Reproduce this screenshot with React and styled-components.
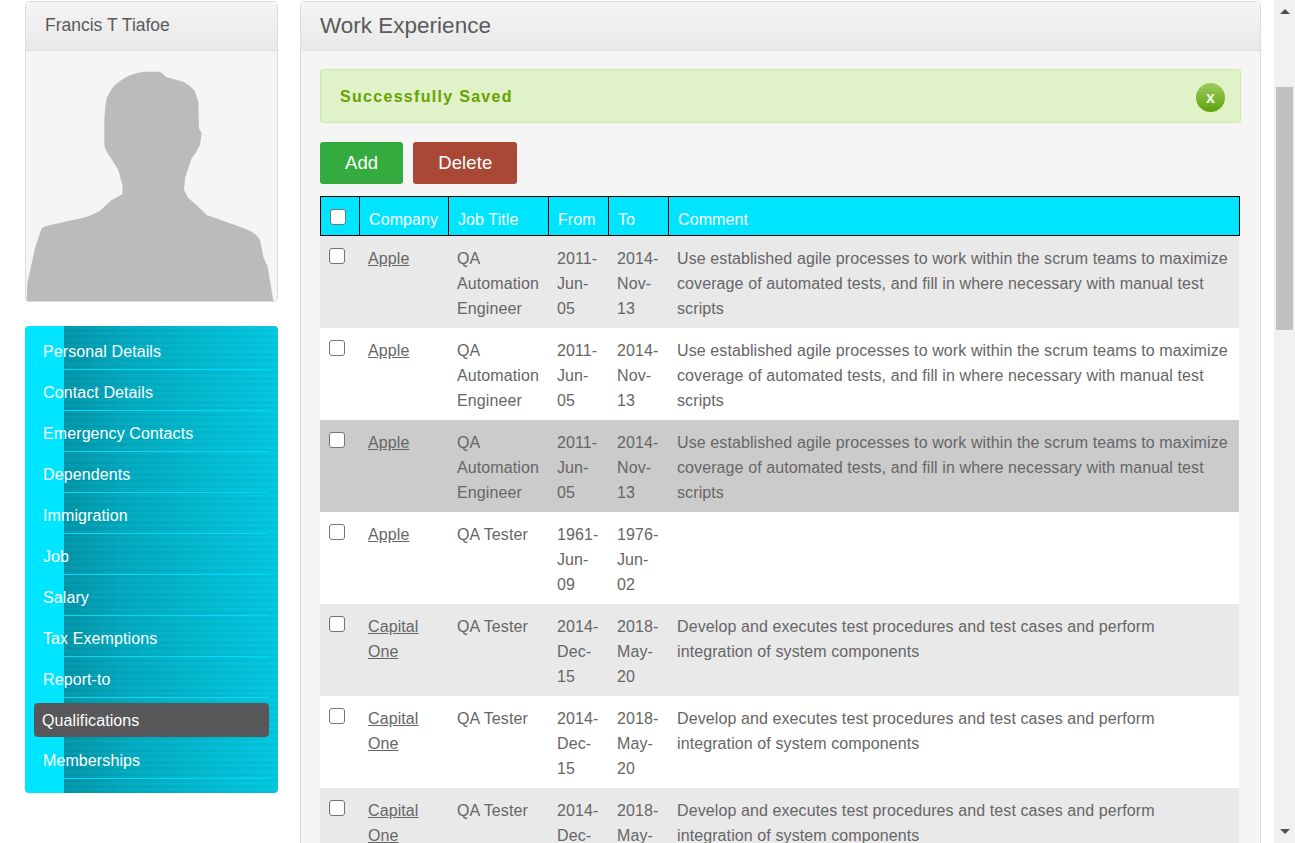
import React from 'react';
import styled, { createGlobalStyle } from 'styled-components';

const GlobalStyle = createGlobalStyle`
  html, body {
    margin: 0;
    height: 100%;
    overflow: hidden;
    background: #fff;
    font-family: 'Liberation Sans', Arial, sans-serif;
    color: #666;
  }
`;

const Page = styled.div`
  display: flex;
  height: 843px;
  overflow: hidden;
`;

const Content = styled.div`
  display: flex;
  align-items: flex-start;
  gap: 22px;
  width: 1274px;
  padding: 1px 13px 0 25px;
  box-sizing: border-box;
`;

const Sidebar = styled.aside`
  width: 253px;
  flex-shrink: 0;
`;

const Panel = styled.section`
  background: #f5f5f5;
  border: 1px solid #ddd;
  border-radius: 4px;
  box-sizing: border-box;
`;

const PanelHeader = styled.header`
  height: 49px;
  box-sizing: border-box;
  border-bottom: 1px solid #ddd;
  background: linear-gradient(to bottom, #f5f5f5, #e8e8e8);
  color: #5a5a5a;
  display: flex;
  align-items: center;
`;

const ProfileName = styled.h3`
  margin: 0 0 1px 19px;
  font-size: 17.5px;
  font-weight: normal;
`;

const PageTitle = styled.h1`
  margin: 0 0 1px 19px;
  font-size: 22.5px;
  font-weight: normal;
`;

const Photo = styled.svg`
  display: block;
  width: 251px;
  height: 250px;
`;

const Menu = styled.nav`
  margin-top: 24px;
  height: 467px;
  box-sizing: border-box;
  padding: 7px 9px 0;
  border-radius: 4px;
  background:
    linear-gradient(to right, #00e5ff 39px, transparent 39px),
    repeating-linear-gradient(to bottom, rgba(255, 255, 255, 0.025) 0 3px, rgba(0, 0, 0, 0.025) 3px 6px),
    linear-gradient(to right, #0095a8 39px, #00a9bf 100px, #00c8e0 100%);
`;

const MenuItem = styled.a`
  display: block;
  position: relative;
  height: ${p => (p.$active ? '34px' : '36px')};
  margin-top: ${p => (p.$active ? '6px' : '0')};
  margin-bottom: 5px;
  padding: ${p => (p.$active ? '1px 0 0 8px' : '2px 0 0 9px')};
  box-sizing: border-box;
  border-radius: 4px;
  font-size: 16px;
  letter-spacing: 0.1px;
  line-height: 34px;
  color: #fff;
  background: ${p => (p.$active ? '#58585a' : 'transparent')};

  &::after {
    content: '';
    display: ${p => (p.$active ? 'none' : 'block')};
    position: absolute;
    left: 30px;
    right: 0;
    bottom: -1px;
    height: 1px;
    background: #00dcf5;
  }
`;

const PanelBody = styled.div`
  padding: 18px 19px 0;
`;

const Main = styled(Panel)`
  width: 961px;
  height: 900px;
  flex-shrink: 0;
`;

const Alert = styled.div`
  display: flex;
  align-items: center;
  justify-content: space-between;
  height: 54px;
  box-sizing: border-box;
  padding: 2px 15px 0 19px;
  background: #dff2c8;
  border: 1px solid #cdeaa6;
  border-radius: 3px;
  color: #6aa100;
  font-size: 16px;
  font-weight: bold;
  letter-spacing: 1.3px;
`;

const CloseBadge = styled.span`
  width: 29px;
  height: 29px;
  margin-top: 1px;
  border-radius: 50%;
  display: flex;
  align-items: center;
  justify-content: center;
  background: linear-gradient(to bottom, #9ccc5c, #5ea30e);
  color: #f4fae8;
  font-size: 16px;
  font-weight: bold;
  letter-spacing: 0;
`;

const Toolbar = styled.div`
  display: flex;
  gap: 10px;
  margin: 19px 0 12px;
`;

const Button = styled.button`
  height: 42px;
  padding: 0 25px;
  border: none;
  border-radius: 3px;
  color: #fff;
  font-family: inherit;
  font-size: 18.5px;
  letter-spacing: 0.1px;
  background: ${p => p.$bg};
`;

const Table = styled.table`
  width: 920px;
  table-layout: fixed;
  border-collapse: separate;
  border-spacing: 0;
  font-size: 16px;
  letter-spacing: 0.1px;
`;

const HeadCell = styled.th`
  height: 40px;
  padding: 4px 9px 4px;
  box-sizing: border-box;
  background: #00e5ff;
  border: 1px solid #000;
  border-left-width: ${p => (p.$first ? '1px' : '0')};
  color: #fff;
  font-weight: normal;
  text-align: left;
  vertical-align: bottom;
  line-height: 22px;
  white-space: nowrap;
`;

const Row = styled.tr`
  background: ${p => p.$bg};
`;

const Cell = styled.td`
  height: 92px;
  padding: 10px 8px 7px;
  box-sizing: border-box;
  vertical-align: top;
  line-height: 25px;
  color: #666;
`;

const LastCell = styled(Cell)`
  border-right: 1px solid #f5f5f5;
`;

const CompanyLink = styled.a`
  color: #666;
  text-decoration: underline;
`;

const Check = styled.input.attrs({ type: 'checkbox' })`
  appearance: none;
  display: block;
  width: 16px;
  height: 16px;
  margin: ${p => (p.$head ? '0 0 6px 0' : '2px 0 0 1px')};
  background: #fff;
  border: 1px solid #767676;
  border-radius: 3px;
  box-sizing: border-box;
`;

const Scrollbar = styled.div`
  width: 21px;
  height: 843px;
  flex-shrink: 0;
  background: #f1f1f1;
  display: flex;
  flex-direction: column;
  align-items: center;
  padding-top: 9px;
  box-sizing: border-box;
  position: relative;
`;

const ArrowUp = styled.span`
  width: 0;
  height: 0;
  border-left: 5px solid transparent;
  border-right: 5px solid transparent;
  border-bottom: 5px solid #505050;
`;

const ArrowDown = styled(ArrowUp)`
  position: absolute;
  bottom: 9px;
  border-bottom: none;
  border-top: 5px solid #505050;
`;

const Thumb = styled.div`
  width: 17px;
  height: 243px;
  margin-top: 73px;
  background: #c1c1c1;
`;

const menu = [
  'Personal Details',
  'Contact Details',
  'Emergency Contacts',
  'Dependents',
  'Immigration',
  'Job',
  'Salary',
  'Tax Exemptions',
  'Report-to',
  'Qualifications',
  'Memberships',
];

const agile =
  'Use established agile processes to work within the scrum teams to maximize coverage of automated tests, and fill in where necessary with manual test scripts';
const develop =
  'Develop and executes test procedures and test cases and perform integration of system components';

const rows = [
  { company: 'Apple', title: 'QA Automation Engineer', from: '2011-Jun-05', to: '2014-Nov-13', comment: agile, bg: '#e9e9e9' },
  { company: 'Apple', title: 'QA Automation Engineer', from: '2011-Jun-05', to: '2014-Nov-13', comment: agile, bg: '#ffffff' },
  { company: 'Apple', title: 'QA Automation Engineer', from: '2011-Jun-05', to: '2014-Nov-13', comment: agile, bg: '#cbcbcb' },
  { company: 'Apple', title: 'QA Tester', from: '1961-Jun-09', to: '1976-Jun-02', comment: '', bg: '#ffffff' },
  { company: 'Capital One', title: 'QA Tester', from: '2014-Dec-15', to: '2018-May-20', comment: develop, bg: '#e9e9e9' },
  { company: 'Capital One', title: 'QA Tester', from: '2014-Dec-15', to: '2018-May-20', comment: develop, bg: '#ffffff' },
  { company: 'Capital One', title: 'QA Tester', from: '2014-Dec-15', to: '2018-May-20', comment: develop, bg: '#e9e9e9' },
];

const columns = [40, 89, 100, 60, 60, 571];

const App = () => {
  return (
    <Page>
      <GlobalStyle />
      <Content>
        <Sidebar>
          <Panel>
            <PanelHeader>
              <ProfileName>Francis T Tiafoe</ProfileName>
            </PanelHeader>
            <Photo viewBox="78 153 753 750">
              <path
                fill="#bbbbbb"
                d="M80 903 L82 850 L105 745 L125 685 Q135 678 150 675 L230 658 Q275 648 300 632 L335 600 L367 583 L368 560 L355 510 L330 470 Q315 450 313 435 L313 360 Q315 320 320 295 Q330 270 345 255 Q365 238 385 228 Q410 218 430 215 L480 215 L500 232 L550 245 Q575 258 585 275 L595 305 L597 385 L605 400 L600 435 Q590 458 575 475 L555 535 L552 570 L565 595 L590 615 L620 645 L690 670 L745 690 Q770 702 780 720 L790 770 L803 800 L820 903 Z"
              />
            </Photo>
          </Panel>
          <Menu>
            {menu.map(item => (
              <MenuItem key={item} $active={item === 'Qualifications'}>{item}</MenuItem>
            ))}
          </Menu>
        </Sidebar>
        <Main>
          <PanelHeader>
            <PageTitle>Work Experience</PageTitle>
          </PanelHeader>
          <PanelBody>
            <Alert>
              Successfully Saved
              <CloseBadge>x</CloseBadge>
            </Alert>
            <Toolbar>
              <Button $bg="#33ab3f">Add</Button>
              <Button $bg="#a94834">Delete</Button>
            </Toolbar>
            <Table>
              <colgroup>
                {columns.map((w, i) => <col key={i} style={{ width: w }} />)}
              </colgroup>
              <thead>
                <tr>
                  <HeadCell $first><Check $head /></HeadCell>
                  <HeadCell>Company</HeadCell>
                  <HeadCell>Job Title</HeadCell>
                  <HeadCell>From</HeadCell>
                  <HeadCell>To</HeadCell>
                  <HeadCell>Comment</HeadCell>
                </tr>
              </thead>
              <tbody>
                {rows.map((row, i) => (
                  <Row key={i} $bg={row.bg}>
                    <Cell><Check /></Cell>
                    <Cell><CompanyLink>{row.company}</CompanyLink></Cell>
                    <Cell>{row.title}</Cell>
                    <Cell>{row.from}</Cell>
                    <Cell>{row.to}</Cell>
                    <LastCell>{row.comment}</LastCell>
                  </Row>
                ))}
              </tbody>
            </Table>
          </PanelBody>
        </Main>
      </Content>
      <Scrollbar>
        <ArrowUp />
        <Thumb />
        <ArrowDown />
      </Scrollbar>
    </Page>
  );
};

export default App;
